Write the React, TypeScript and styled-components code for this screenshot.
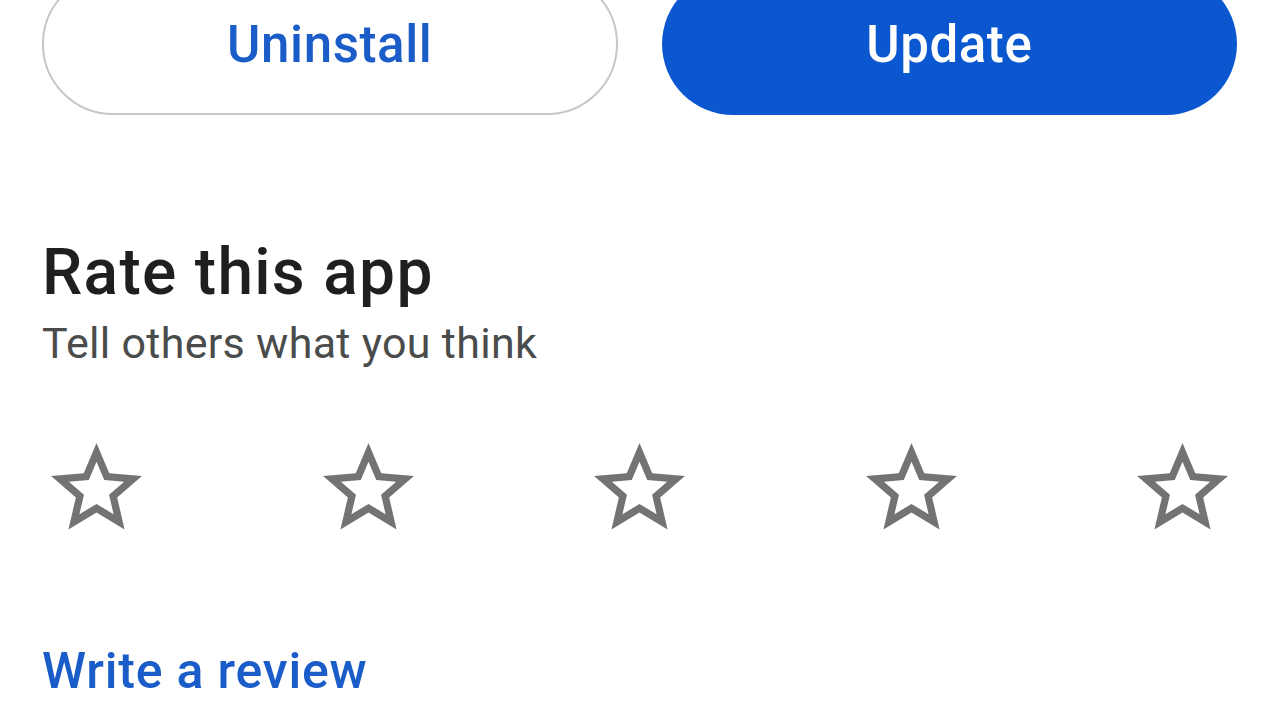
import * as React from 'react';
import styled, { createGlobalStyle } from 'styled-components';

const GlobalStyle = createGlobalStyle`
  html, body {
    margin: 0;
    padding: 0;
    background: #ffffff;
    overflow: hidden;
  }
  body {
    font-family: Roboto, "Noto Sans", Arial, sans-serif;
    -webkit-font-smoothing: antialiased;
  }
`;

const styles = {
  page: styled.div`
    width: 1280px;
    height: 720px;
    box-sizing: border-box;
    padding: 0 43px 0 42px;
    display: flex;
    flex-direction: column;
    overflow: hidden;
  `,
  actions: styled.div`
    display: grid;
    grid-template-columns: 1fr 1fr;
    gap: 44px;
    margin-top: -27px;
  `,
  button: styled.button<{ $primary?: boolean }>`
    height: 142px;
    border-radius: 71px;
    font-family: Roboto, "Noto Sans", Arial, sans-serif;
    font-size: 51px;
    font-weight: 500;
    letter-spacing: 0.6px;
    padding: 0;
    cursor: pointer;
    border: ${(p) => (p.$primary ? 'none' : '2.5px solid #c6c7c7')};
    background: ${(p) => (p.$primary ? '#0b57d0' : '#ffffff')};
    color: ${(p) => (p.$primary ? '#ffffff' : '#1a5cc8')};
  `,
  title: styled.h2`
    margin: 120px 0 0;
    font-size: 64px;
    line-height: 76px;
    font-weight: 500;
    letter-spacing: 1.3px;
    color: #1f1f1f;
  `,
  subtitle: styled.p`
    margin: 7px 0 0;
    font-size: 43px;
    line-height: 50px;
    font-weight: 400;
    letter-spacing: 0.3px;
    color: #4a4b4b;
  `,
  stars: styled.div`
    display: flex;
    justify-content: space-between;
    margin-top: 66px;
    svg {
      display: block;
      width: 109px;
      height: 109px;
      fill: #727373;
    }
  `,
  review: styled.a`
    display: block;
    margin-top: 98px;
    font-size: 50px;
    line-height: 60px;
    font-weight: 500;
    letter-spacing: 0.8px;
    color: #1a5cc8;
    text-decoration: none;
    cursor: pointer;
  `,
};

const StarBorder: React.FunctionComponent = () => (
  <svg viewBox="0 0 24 24" aria-hidden="true">
    <path d="M22 9.24l-7.19-.62L12 2 9.19 8.63 2 9.24l5.46 4.73L5.82 21 12 17.27 18.18 21l-1.630-7.03L22 9.24zM12 15.4l-3.76 2.27 1-4.28-3.32-2.88 4.38-.38L12 6.1l1.71 4.04 4.38.38-3.32 2.88 1 4.28L12 15.4z" />
  </svg>
);

const App: React.FunctionComponent = () => {
  return (
    <>
      <GlobalStyle />
      <styles.page>
        <styles.actions>
          <styles.button>Uninstall</styles.button>
          <styles.button $primary>Update</styles.button>
        </styles.actions>
        <styles.title>Rate this app</styles.title>
        <styles.subtitle>Tell others what you think</styles.subtitle>
        <styles.stars>
          {[1, 2, 3, 4, 5].map((n) => (
            <StarBorder key={n} />
          ))}
        </styles.stars>
        <styles.review>Write a review</styles.review>
      </styles.page>
    </>
  );
};

export default App;
